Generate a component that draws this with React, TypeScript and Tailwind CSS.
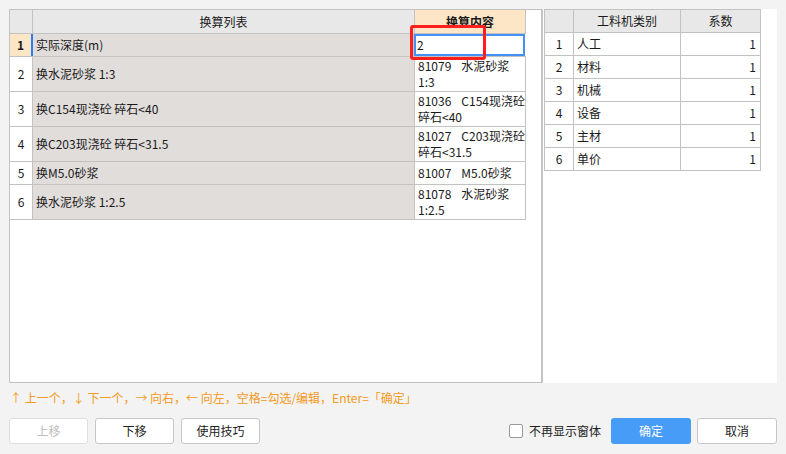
import React from 'react';

type LRow = { n: number; name: string; code?: string; val: string[]; h: string; active?: boolean };

const leftRows: LRow[] = [
  { n: 1, name: '实际深度(m)', val: ['2'], h: 'h-[23px]', active: true },
  { n: 2, name: '换水泥砂浆 1:3', code: '81079', val: ['水泥砂浆', '1:3'], h: 'h-[35px]' },
  { n: 3, name: '换C154现浇砼 碎石<40', code: '81036', val: ['C154现浇砼', '碎石<40'], h: 'h-[35px]' },
  { n: 4, name: '换C203现浇砼 碎石<31.5', code: '81027', val: ['C203现浇砼', '碎石<31.5'], h: 'h-[35px]' },
  { n: 5, name: '换M5.0砂浆', code: '81007', val: ['M5.0砂浆'], h: 'h-[23px]' },
  { n: 6, name: '换水泥砂浆 1:2.5', code: '81078', val: ['水泥砂浆', '1:2.5'], h: 'h-[35px]' },
];

const rightRows = ['人工', '材料', '机械', '设备', '主材', '单价'];

export default function App() {
  return (
    <div className="w-[786px] h-[454px] bg-[#f3f3f3] relative overflow-hidden font-['Noto_Sans_CJK_SC',sans-serif] text-[12px] text-[#1a1a1a]">
      <div className="flex ml-[9px] mt-[9px] h-[374px]">
        {/* left panel */}
        <div className="w-[534px] h-full bg-white border-l border-t border-b border-[#c2c2c2] border-r-2 border-r-[#c4c4c4]">
          <div className="flex flex-col w-[516px]">
            <div className="flex h-[24px] border-b border-[#c2c2c2]">
              <div className="w-[23px] shrink-0 bg-[#e8e8e8] border-r border-[#c2c2c2]" />
              <div className="w-[382px] shrink-0 bg-[#e8e8e8] border-r border-[#c2c2c2] flex items-center justify-center">换算列表</div>
              <div className="w-[111px] shrink-0 bg-[#fde6c6] border-r border-[#c2c2c2] flex items-center justify-center font-bold">换算内容</div>
            </div>
            {leftRows.map((r) => (
              <div key={r.n} className={`flex ${r.h} border-b border-[#c2c2c2]`}>
                <div
                  className={
                    r.active
                      ? 'w-[23px] shrink-0 bg-[#fde6c6] border-r-2 border-[#2f7df6] flex items-center justify-center font-bold'
                      : 'w-[23px] shrink-0 bg-white border-r border-[#c2c2c2] flex items-center justify-center'
                  }
                >
                  {r.n}
                </div>
                <div className={r.active ? 'w-[381px] shrink-0 bg-[#e1dddb] border-r border-[#c2c2c2] flex items-center pl-[3px]' : 'w-[382px] shrink-0 bg-[#e1dddb] border-r border-[#c2c2c2] flex items-center pl-[3px]'}>
                  {r.name}
                </div>
                <div
                  className={
                    r.active
                      ? 'w-[111px] shrink-0 bg-white shadow-[inset_0_0_0_2px_#4390f6] flex items-center pl-[3px] leading-[16px]'
                      : 'w-[111px] shrink-0 bg-white border-r border-[#c2c2c2] flex flex-col justify-center pl-[3px] leading-[16px]'
                  }
                >
                  {r.code ? (
                    <>
                      <div>
                        <span className="mr-[10px]">{r.code}</span>
                        <span>{r.val[0]}</span>
                      </div>
                      {r.val[1] ? <div>{r.val[1]}</div> : null}
                    </>
                  ) : (
                    <div>{r.val[0]}</div>
                  )}
                </div>
              </div>
            ))}
          </div>
        </div>
        {/* right panel */}
        <div className="w-[234px] h-full bg-white">
          <div className="ml-[1px] w-[217px] border-l border-t border-[#c2c2c2] flex flex-col">
            <div className="flex h-[23px] border-b border-[#c2c2c2] bg-[#e8e8e8]">
              <div className="w-[29px] shrink-0 border-r border-[#c2c2c2]" />
              <div className="w-[107px] shrink-0 border-r border-[#c2c2c2] flex items-center justify-center">工料机类别</div>
              <div className="w-[80px] shrink-0 border-r border-[#c2c2c2] flex items-center justify-center">系数</div>
            </div>
            {rightRows.map((t, i) => (
              <div key={t} className="flex h-[23px] border-b border-[#c2c2c2]">
                <div className="w-[29px] shrink-0 border-r border-[#c2c2c2] flex items-center justify-center">{i + 1}</div>
                <div className="w-[107px] shrink-0 border-r border-[#c2c2c2] flex items-center pl-[3px]">{t}</div>
                <div className="w-[80px] shrink-0 border-r border-[#c2c2c2] flex items-center justify-end pr-[4px]">1</div>
              </div>
            ))}
          </div>
        </div>
      </div>

      {/* hint */}
      <div className="mt-[7px] ml-[10px] h-[16px] leading-[16px] text-[#f59a23] whitespace-pre">
        ↑ 上一个，↓ 下一个，→ 向右，← 向左，空格=勾选/编辑，Enter=「确定」
      </div>

      {/* buttons */}
      <div className="mt-[12px] flex items-center pl-[9px] pr-[9px] h-[26px]">
        <div className="flex gap-[7px]">
          <button className="w-[79px] h-[26px] bg-white border border-[#dedede] rounded-[3px] text-[#bdbdbd]">上移</button>
          <button className="w-[79px] h-[26px] bg-white border border-[#c6c6c6] rounded-[3px] text-[#222]">下移</button>
          <button className="w-[79px] h-[26px] bg-white border border-[#c6c6c6] rounded-[3px] text-[#222]">使用技巧</button>
        </div>
        <div className="flex-1" />
        <div className="flex items-center">
          <div className="w-[14px] h-[14px] bg-white border border-[#9a9a9a] rounded-[2px]" />
          <span className="ml-[6px] text-[#222]">不再显示窗体</span>
          <button className="ml-[10px] w-[80px] h-[26px] bg-[#479cf8] rounded-[3px] text-white">确定</button>
          <button className="ml-[6px] w-[80px] h-[26px] bg-white border border-[#c6c6c6] rounded-[3px] text-[#222]">取消</button>
        </div>
      </div>

      {/* red annotation */}
      <div className="absolute left-[410px] top-[25px] w-[76px] h-[35px] border-[3px] border-[#ff1f1f] rounded-[3px]" />
    </div>
  );
}
